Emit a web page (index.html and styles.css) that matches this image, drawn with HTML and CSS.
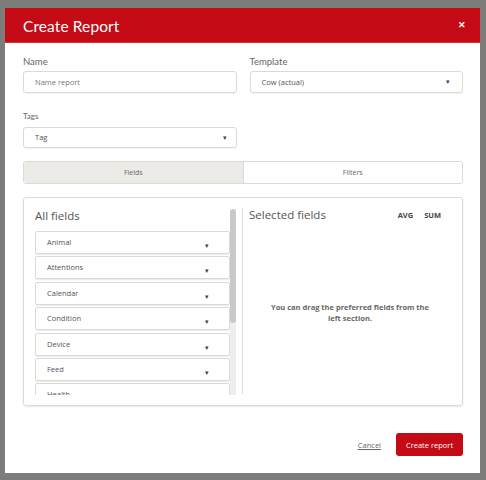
FILE: index.html
```
<!DOCTYPE html>
<html lang="en">
<head>
  <meta charset="UTF-8" />
  <meta name="viewport" content="width=device-width, initial-scale=1.0" />
  <title>Create Report</title>
  <link rel="stylesheet" href="styles.css">
</head>
<body>
  <div id="modal">
    <div class="modalHeader">
      <div class="modalTitle">Create Report</div>
      <div class="closeBtn">&#x2715;</div>
    </div>

    <div class="modalBody">
      <div class="formGrid">
        <div class="field">
          <label class="fieldLabel">Name</label>
          <div class="input placeholder">Name report</div>
        </div>
        <div class="field">
          <label class="fieldLabel">Template</label>
          <div class="input select">Cow (actual)<span class="caret">&#9662;</span></div>
        </div>
        <div class="field">
          <label class="fieldLabel small">Tags</label>
          <div class="input select tagSelect">Tag<span class="caret">&#9662;</span></div>
        </div>
      </div>

      <div class="tabs">
        <div class="tab active">Fields</div>
        <div class="tab">Filters</div>
      </div>

      <div class="panel">
        <div class="allFields">
          <div class="fieldList">
            <div class="panelTitle">All fields</div>
            <div class="fieldItem">Animal<span class="caret">&#9662;</span></div>
            <div class="fieldItem">Attentions<span class="caret">&#9662;</span></div>
            <div class="fieldItem">Calendar<span class="caret">&#9662;</span></div>
            <div class="fieldItem">Condition<span class="caret">&#9662;</span></div>
            <div class="fieldItem">Device<span class="caret">&#9662;</span></div>
            <div class="fieldItem">Feed<span class="caret">&#9662;</span></div>
            <div class="fieldItem">Health<span class="caret">&#9662;</span></div>
          </div>
          <div class="scrollbar">
            <div class="scrollThumb"></div>
          </div>
        </div>
        <div class="selectedFields">
          <div class="selectedHead">
            <div class="panelTitle">Selected fields</div>
            <div class="aggr">
              <span>AVG</span>
              <span>SUM</span>
            </div>
          </div>
          <div class="emptyText">You can drag the preferred fields from the<br>left section.</div>
        </div>
      </div>

      <div class="modalFooter">
        <a class="cancelLink" href="#">Cancel</a>
        <button class="createBtn">Create report</button>
      </div>
    </div>
  </div>
</body>
</html>
```

FILE: styles.css
```
html, body {
  margin: 0;
  padding: 0;
  height: 100%;
}

body {
  background: #7c7c7b;
  font-family: "Open Sans", "Noto Sans", sans-serif;
  color: #555;
  padding: 8px 6px 7px 5px;
  box-sizing: border-box;
}

#modal {
  width: 475px;
  height: 465px;
  background: #fff;
  display: flex;
  flex-direction: column;
}

.modalHeader {
  height: 35px;
  background: #c40a14;
  border-bottom: 1px solid #d8333b;
  box-sizing: border-box;
  display: flex;
  align-items: center;
  justify-content: space-between;
  padding: 0 14px 0 18px;
  color: #fff;
}

.modalTitle {
  font-family: Lato, sans-serif;
  font-size: 15.5px;
  letter-spacing: 0.1px;
  margin-top: 1px;
}

.closeBtn {
  font-size: 9px;
  font-weight: bold;
  margin-top: -2px;
}

.modalBody {
  flex: 1;
  padding: 13px 17px 0 18px;
  display: flex;
  flex-direction: column;
}

.formGrid {
  display: grid;
  grid-template-columns: 1fr 1fr;
  column-gap: 13px;
  row-gap: 17px;
}

.fieldLabel {
  display: block;
  font-family: Lato, sans-serif;
  font-size: 9.5px;
  line-height: 12px;
  color: #666;
  margin-bottom: 3px;
}

.fieldLabel.small {
  font-size: 8px;
  margin-bottom: 5px;
}

.input {
  height: 22px;
  border: 1px solid #dcdad7;
  border-radius: 3px;
  box-sizing: border-box;
  box-shadow: 0 1px 1px rgba(0, 0, 0, 0.06);
  font-size: 7.5px;
  line-height: 20px;
  padding: 0 12px 0 11px;
  color: #555;
  display: flex;
  justify-content: space-between;
}

.placeholder {
  color: #777;
}

.tagSelect {
  height: 21px;
  line-height: 19px;
  padding-right: 9px;
}

.caret {
  font-size: 7px;
  color: #444;
}

.tabs {
  display: flex;
  margin-top: 13px;
  height: 23px;
  border: 1px solid #dcdad7;
  border-radius: 3px;
  box-sizing: border-box;
  overflow: hidden;
}

.tab {
  flex: 1;
  text-align: center;
  font-size: 7px;
  line-height: 21px;
  color: #666;
}

.tab.active {
  background: #edebe8;
  border-right: 1px solid #dcdad7;
}

.panel {
  margin-top: 13px;
  height: 209px;
  border: 1px solid #dcdad7;
  border-radius: 3px;
  box-sizing: border-box;
  box-shadow: 0 1px 2px rgba(0, 0, 0, 0.1);
  padding: 10px 11px 11px 11px;
  display: flex;
}

.allFields {
  width: 201px;
  height: 186px;
  margin-right: 6px;
  margin-top: 1px;
  display: flex;
}

.fieldList {
  flex: 1;
  overflow: hidden;
}

.scrollbar {
  width: 6px;
  background: #eeeeee;
  border-radius: 3px 3px 0 0;
}

.scrollThumb {
  height: 114px;
  background: #c9c9c9;
  border-radius: 3px;
}

.panelTitle {
  font-size: 11.5px;
  line-height: 14px;
  color: #555;
  height: 22px;
}

.fieldItem {
  height: 23px;
  margin-bottom: 2.4px;
  border: 1px solid #dcdad7;
  border-radius: 2px;
  box-sizing: border-box;
  box-shadow: 0 1px 1px rgba(0, 0, 0, 0.08);
  font-size: 7.5px;
  line-height: 20px;
  padding: 0 20px 0 11px;
  color: #555;
  display: flex;
  justify-content: space-between;
}

.fieldItem .caret {
  line-height: 28px;
}

.selectedFields {
  flex: 1;
  border-left: 1px solid #dcdad7;
  padding-left: 6px;
  display: flex;
  flex-direction: column;
}

.selectedHead {
  display: flex;
  justify-content: space-between;
}

.aggr {
  font-size: 7.5px;
  font-weight: bold;
  color: #444;
  display: flex;
  gap: 11px;
  padding-right: 10px;
  line-height: 14px;
}

.emptyText {
  margin-top: 72px;
  text-align: center;
  font-size: 7.5px;
  font-weight: bold;
  line-height: 11px;
  color: #666;
}

.modalFooter {
  margin-top: 27px;
  display: flex;
  justify-content: flex-end;
  align-items: center;
  gap: 15px;
}

.cancelLink {
  font-size: 7.5px;
  color: #666;
  text-decoration: underline;
}

.createBtn {
  height: 23px;
  width: 67px;
  padding: 0;
  border: none;
  border-radius: 3px;
  background: #c40a14;
  color: #fff;
  font-family: "Open Sans", sans-serif;
  font-size: 7.5px;
  cursor: pointer;
}
```
